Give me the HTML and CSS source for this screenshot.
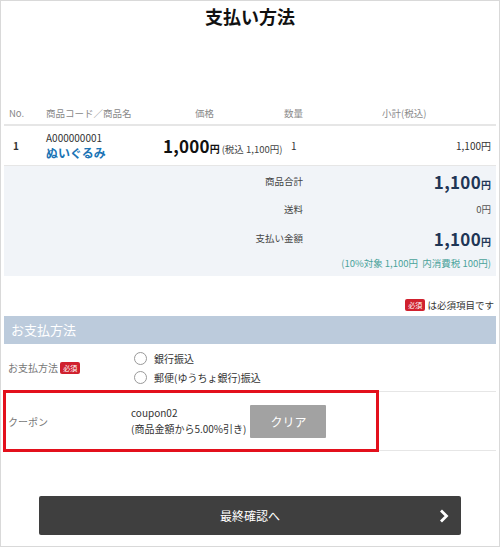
FILE: index.html
```html
<!DOCTYPE html>
<html lang="ja">
<head>
<meta charset="utf-8">
<link rel="stylesheet" href="styles.css">
</head>
<body>
<div class="frame">
  <h1 class="title">支払い方法</h1>
  <div class="content">
    <div class="tbl head">
      <div class="c-no">No.</div>
      <div class="c-name">商品コード／商品名</div>
      <div class="c-price h-price">価格</div>
      <div class="c-qty">数量</div>
      <div class="c-sub">小計(税込)</div>
    </div>
    <div class="tbl item">
      <div class="c-no num">1</div>
      <div class="c-name">
        <div class="code">A000000001</div>
        <div class="pname">ぬいぐるみ</div>
      </div>
      <div class="c-price"><span class="big">1,000</span><span class="yen">円</span><span class="incl">(税込 1,100円)</span></div>
      <div class="c-qty v-qty">1</div>
      <div class="c-sub v-sub">1,100円</div>
    </div>
    <div class="summary">
      <div class="s-row r1"><div class="s-label">商品合計</div><div class="s-val"><span class="total">1,100</span><span class="tyen">円</span></div></div>
      <div class="s-row r2"><div class="s-label">送料</div><div class="s-val small">0円</div></div>
      <div class="s-row r3"><div class="s-label">支払い金額</div><div class="s-val"><span class="total">1,100</span><span class="tyen">円</span></div></div>
      <div class="s-note">(10%対象 1,100円&nbsp; 内消費税 100円)</div>
    </div>
    <div class="req-note"><span class="badge">必須</span> は必須項目です</div>
    <div class="sec-head">お支払方法</div>
    <div class="form-row pay">
      <div class="f-label">お支払方法 <span class="badge">必須</span></div>
      <div class="f-body radios">
        <label class="radio"><span class="circle"></span>銀行振込</label>
        <label class="radio"><span class="circle"></span>郵便(ゆうちょ銀行)振込</label>
      </div>
    </div>
    <div class="form-row coupon">
      <div class="f-label">クーポン</div>
      <div class="f-body coupon-body">
        <div class="coupon-text">coupon02<br>(商品金額から5.00%引き)</div>
        <div class="clear-btn">クリア</div>
      </div>
      <div class="highlight"></div>
    </div>
    <div class="btn-wrap">
      <div class="next-btn">最終確認へ
        <svg class="chev" width="10" height="14" viewBox="0 0 10 14"><path d="M2 1.5 L7.5 7 L2 12.5" fill="none" stroke="#fff" stroke-width="2.8"/></svg>
      </div>
    </div>
  </div>
</div>
</body>
</html>
```

FILE: styles.css
```css
* { box-sizing: border-box; }
html, body { margin: 0; padding: 0; background: #fff; }
body {
  font-family: "Noto Sans CJK JP", "Noto Sans", sans-serif;
  color: #333;
}
.frame {
  width: 500px;
  height: 547px;
  border: 1px solid #d9d9d9;
  overflow: hidden;
}
.title {
  margin: 0;
  padding-top: 3px;
  height: 100px;
  font-size: 18px;
  line-height: 24px;
  font-weight: 700;
  text-align: center;
  color: #111;
}
.content { padding: 0 3px; }
.tbl {
  display: grid;
  grid-template-columns: 37px 117px 121px 98px 1fr;
  align-items: center;
  padding-left: 5px;
}
.head {
  height: 25px;
  border-bottom: 2px solid #e6e6e6;
  font-size: 9.5px;
  color: #888;
  line-height: 14px;
}
.h-price { padding-left: 32px; }
.item {
  height: 40px;
  border-bottom: 1px solid #e6e6e6;
  font-size: 10px;
}
.num { font-weight: 700; font-size: 10px; padding-left: 4px; }
.code { font-size: 10px; line-height: 14px; color: #333; }
.pname { font-size: 12px; font-weight: 700; color: #1b74b5; line-height: 16px; }
.big { font-size: 17px; font-weight: 700; color: #111; letter-spacing: 0.2px; }
.yen { font-size: 10px; font-weight: 700; color: #111; margin-right: 2px; }
.incl { font-size: 9.5px; color: #444; }
.v-qty { padding-left: 7px; font-size: 10px; }
.v-sub { text-align: right; padding-right: 5px; font-size: 10px; }
.summary {
  background: #f1f4f8;
  height: 110px;
  padding-top: 1px;
}
.s-row {
  display: grid;
  grid-template-columns: 299px 1fr;
  align-items: center;
}
.r1 { height: 28px; }
.r2 { height: 28px; }
.r3 { height: 30px; }
.s-label { text-align: right; font-size: 9.5px; color: #444; }
.s-val { text-align: right; padding-right: 5px; color: #1f3656; }
.s-val.small { font-size: 9.5px; color: #555; }
.total { font-size: 17px; font-weight: 700; letter-spacing: 0.3px; }
.tyen { font-size: 10px; font-weight: 700; }
.s-note {
  text-align: right;
  padding-right: 5px;
  font-size: 9.5px;
  color: #4aa39b;
  line-height: 18px;
  padding-top: 1px;
}
.req-note {
  height: 40px;
  padding-top: 22px;
  text-align: right;
  padding-right: 2px;
  font-size: 9.5px;
  line-height: 14px;
  color: #333;
}
.badge {
  display: inline-block;
  background: #d0212e;
  color: #fff;
  font-size: 7px;
  line-height: 12px;
  height: 12px;
  padding: 0 3px;
  border-radius: 2px;
  vertical-align: 1px;
}
.sec-head {
  height: 28px;
  background: #bccbdc;
  color: #fff;
  font-size: 13px;
  line-height: 28px;
  padding-left: 7px;
}
.form-row {
  display: grid;
  grid-template-columns: 127px 1fr;
  align-items: center;
  border-bottom: 1px solid #e6e6e6;
  position: relative;
}
.pay { height: 48px; }
.f-label { padding-left: 4px; font-size: 10px; color: #777; }
.radios { display: flex; flex-direction: column; gap: 3px; padding-top: 1px; }
.radio {
  display: flex;
  align-items: center;
  font-size: 10px;
  line-height: 16px;
  color: #333;
}
.circle {
  width: 13px;
  height: 13px;
  border: 1px solid #999;
  border-radius: 50%;
  background: #fff;
  margin-right: 7px;
  margin-left: 3px;
}
.coupon { height: 59px; }
.coupon-body { display: flex; align-items: center; }
.coupon-text { font-size: 10px; line-height: 16px; color: #333; white-space: nowrap; margin-right: 4px; }
.clear-btn {
  width: 76px;
  height: 33px;
  background: #a2a2a2;
  color: #fff;
  font-size: 12px;
  line-height: 33px;
  text-align: center;
  border-radius: 1px;
}
.highlight {
  position: absolute;
  left: -1px;
  top: -2px;
  width: 376px;
  height: 62px;
  border: 3px solid #e3101c;
  pointer-events: none;
}
.btn-wrap {
  padding-top: 45px;
  padding-left: 35px;
}
.next-btn {
  position: relative;
  width: 422px;
  height: 39px;
  background: #3f3f3f;
  border-radius: 2px;
  color: #fff;
  font-size: 12px;
  line-height: 39px;
  text-align: center;
}
.chev { position: absolute; right: 12px; top: 13px; }
```
